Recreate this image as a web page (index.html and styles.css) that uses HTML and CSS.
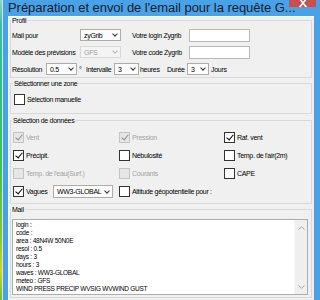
FILE: index.html
```html
<!DOCTYPE html>
<html lang="fr">
<head>
  <meta charset="UTF-8">
  <title>Préparation et envoi de l'email</title>
  <link rel="stylesheet" href="styles.css">
</head>
<body>
  <div class="screen">
    <div class="map"></div>
    <div class="window">
      <div class="titlebar">
        <span class="title">Préparation et envoi de l'email pour la requête G...</span>
        <span class="close">
          <svg width="27" height="7" viewBox="0 0 27 7"><path d="M10 -2 L14 3 L18 -2 M14 3 L10 8 M14 3 L18 8" stroke="#fff" stroke-width="1.6" fill="none"/></svg>
        </span>
      </div>

      <div class="panel">
        <fieldset class="box profil">
          <legend>Profil</legend>
          <div class="row">
            <span class="lbl w68">Mail pour</span>
            <span class="combo w41"><span>zyGrib</span><i class="chev"></i></span>
            <span class="lbl w57 ml11">Votre login Zygrib</span>
            <span class="field"></span>
          </div>
          <div class="row">
            <span class="lbl w68">Modèle des prévisions</span>
            <span class="combo w41 off"><span>GFS</span><i class="chev"></i></span>
            <span class="lbl w57 ml11">Votre code Zygrib</span>
            <span class="field"></span>
          </div>
          <div class="row">
            <span class="lbl w34">Résolution</span>
            <span class="combo w31"><span>0.5</span><i class="chev"></i></span>
            <span class="lbl w9 deg">°</span>
            <span class="lbl w28">Intervalle</span>
            <span class="combo w25"><span>3</span><i class="chev"></i></span>
            <span class="lbl w27 ml1">heures</span>
            <span class="lbl w20">Durée</span>
            <span class="combo w22"><span>3</span><i class="chev"></i></span>
            <span class="lbl ml2">Jours</span>
          </div>
        </fieldset>

        <fieldset class="box zone">
          <legend>Sélectionner une zone</legend>
          <label class="check"><span class="cb"></span>Sélection manuelle</label>
        </fieldset>

        <fieldset class="box donnees">
          <legend>Sélection de données</legend>
          <div class="grid">
            <label class="check off"><span class="cb on"></span>Vent</label>
            <label class="check off"><span class="cb on"></span>Pression</label>
            <label class="check"><span class="cb on"></span>Raf. vent</label>

            <label class="check"><span class="cb on"></span>Précipit.</label>
            <label class="check"><span class="cb"></span>Nébulosité</label>
            <label class="check"><span class="cb"></span>Temp. de l'air(2m)</label>

            <label class="check off"><span class="cb"></span>Temp. de l'eau(Surf.)</label>
            <label class="check off"><span class="cb"></span>Courants</label>
            <label class="check"><span class="cb"></span>CAPE</label>

            <div class="vagues">
              <label class="check"><span class="cb on"></span>Vagues</label>
              <span class="combo w60 tall"><span>WW3-GLOBAL</span><i class="chev"></i></span>
            </div>
            <label class="check span2"><span class="cb"></span>Altitude géopotentielle pour :</label>
          </div>
        </fieldset>

        <fieldset class="box mail">
          <legend>Mail</legend>
          <div class="mailbox">
            <div class="mailtext">login :
code :
area : 48N4W 50N0E
resol : 0.5
days : 3
hours : 3
waves : WW3-GLOBAL
meteo : GFS
WIND PRESS PRECIP WVSIG WVWIND GUST</div>
            <div class="scroll">
              <svg width="7" height="4" viewBox="0 0 7 4"><path d="M0.5 3.5 L3.5 0.8 L6.5 3.5" stroke="#a8a8a8" stroke-width="1" fill="none"/></svg>
              <svg width="7" height="4" viewBox="0 0 7 4"><path d="M0.5 0.5 L3.5 3.2 L6.5 0.5" stroke="#a8a8a8" stroke-width="1" fill="none"/></svg>
            </div>
          </div>
        </fieldset>
      </div>
    </div>
  </div>
</body>
</html>
```

FILE: styles.css
```css
* { box-sizing: border-box; }
body {
  margin: 0;
  width: 320px;
  height: 300px;
  overflow: hidden;
  font-family: "Liberation Sans", Arial, sans-serif;
  font-size: 7px;
  letter-spacing: -0.3px;
  color: #000;
}

.screen {
  display: flex;
  width: 320px;
  height: 300px;
  overflow: hidden;
}

.map {
  width: 3px;
  flex: none;
  border-right: 1px solid #cfe6f5;
  background: linear-gradient(#8fd6c8 0%, #3fb9b8 8%, #35be86 25%, #3fbf55 55%, #8cc83a 80%, #d2d12e 90%, #6cbf40 100%);
}

.window {
  flex: 1;
  min-width: 0;
  display: flex;
  flex-direction: column;
  background: #4ba1e6;
  padding: 0 6px 0 5px;
}

.titlebar {
  height: 16px;
  display: flex;
  align-items: flex-start;
}

.title {
  flex: 1;
  min-width: 0;
  font-size: 13px;
  letter-spacing: -0.05px;
  line-height: 15px;
  color: #13202f;
  white-space: nowrap;
}

.close {
  flex: none;
  width: 27px;
  height: 7px;
  background: #c75050;
  margin-right: -2px;
  display: flex;
}

.panel {
  flex: 1;
  background: #f0f0f0;
  border-top: 1px solid #fbfbfb;
  border-left: 1px solid #fbfbfb;
  padding: 0 2px 0 1px;
  display: flex;
  flex-direction: column;
}

.box {
  margin: 0;
  border: 1px solid #d9d9d9;
  padding: 0 1px;
  min-width: 0;
}

.box legend {
  padding: 0 1px;
  margin-left: -1px;
  line-height: 7px;
}

.profil {
  padding-top: 5px;
  padding-bottom: 2px;
  display: flex;
  flex-direction: column;
  gap: 5px;
}
.zone {
  margin-top: 2px;
  padding: 7px 1px 8px 3px;
}
.donnees {
  margin-top: 3px;
  padding: 7px 1px 5px 2px;
}
.mail {
  margin-top: 2px;
  padding: 6px 1px 2px 1px;
}

.row {
  display: flex;
  align-items: center;
  height: 12px;
}

.lbl { white-space: nowrap; flex: none; }
.w68 { width: 68px; }
.w57 { width: 57px; }
.w34 { width: 34px; }
.w28 { width: 28px; }
.w27 { width: 27px; }
.w20 { width: 20px; }
.w9 { width: 9px; }
.ml11 { margin-left: 11px; }
.ml2 { margin-left: 2px; }
.ml1 { margin-left: 1px; }
.deg { padding-left: 2px; }

.combo {
  flex: none;
  height: 12px;
  display: flex;
  align-items: center;
  justify-content: space-between;
  padding: 0 2px 0 3px;
  background: #fcfcfc;
  border: 1px solid #acacac;
  white-space: nowrap;
}
.combo.tall { height: 13px; }
.w41 { width: 41px; }
.w31 { width: 31px; }
.w25 { width: 25px; }
.w22 { width: 22px; }
.w60 { width: 60px; }

.chev {
  width: 4px;
  height: 4px;
  border-right: 1.3px solid #333;
  border-bottom: 1.3px solid #333;
  transform: rotate(45deg);
  margin: -2px 1px 0 0;
}

.combo.off {
  background: #f4f4f4;
  border-color: #d9d9d9;
  color: #a3a3a3;
}
.combo.off .chev { border-color: #b4b4b4; }

.field {
  width: 61px;
  height: 13px;
  background: #fff;
  border: 1px solid #b8b8b8;
}

.check {
  display: flex;
  align-items: center;
  gap: 2px;
  height: 11px;
  white-space: nowrap;
}

.cb {
  flex: none;
  width: 11px;
  height: 11px;
  border: 1px solid #333;
  background: #fff;
  position: relative;
}
.cb.on::after {
  content: "";
  position: absolute;
  left: 3px;
  top: 0px;
  width: 3px;
  height: 6px;
  border-right: 1.8px solid #000;
  border-bottom: 1.8px solid #000;
  transform: rotate(40deg);
}

.check.off { color: #a3a3a3; }
.check.off .cb {
  border-color: #c4c4c4;
  background: #e6e6e6;
}
.check.off .cb.on::after { border-color: #8c8c8c; }

.grid {
  display: grid;
  grid-template-columns: 106px 105px minmax(0, 1fr);
  grid-auto-rows: 13px;
  row-gap: 5px;
  align-items: center;
}

.vagues {
  display: flex;
  align-items: center;
  gap: 3px;
}
.vagues .check { width: 37px; }

.span2 { grid-column: span 2; }

.mailbox {
  display: flex;
  height: 76px;
  margin-right: 2px;
  background: #fff;
  border: 1px solid #adadad;
}

.mailtext {
  flex: 1;
  padding: 1px 3px;
  font-size: 6.5px;
  letter-spacing: -0.25px;
  line-height: 8px;
  white-space: pre-line;
}

.scroll {
  width: 13px;
  background: #efefef;
  border-left: 1px solid #f6f6f6;
  display: flex;
  flex-direction: column;
  justify-content: space-between;
  align-items: center;
  padding: 6px 0 5px;
}
```
